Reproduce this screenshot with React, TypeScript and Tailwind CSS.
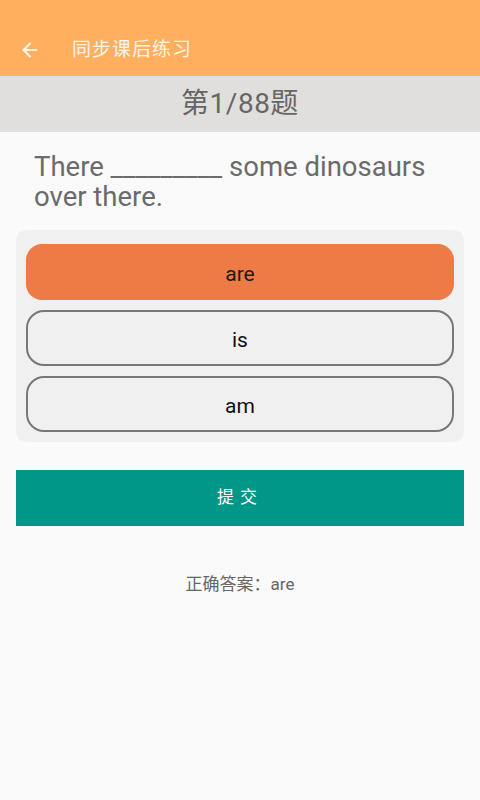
import { ArrowLeft } from "lucide-react";

const options = ["are", "is", "am"];

export default function App() {
  const selected = "are";
  return (
    <div
      className="min-h-[800px] bg-[#fafafa] flex flex-col"
      style={{ fontFamily: 'Roboto, "Noto Sans CJK SC", sans-serif' }}
    >
      {/* Toolbar */}
      <header className="h-[76px] bg-[#ffaf5e] flex items-end pb-[12px]">
        <div className="flex items-center h-[28px]">
          <ArrowLeft className="ml-[19px] w-[22px] h-[22px] text-[#fff6ea]" strokeWidth={2.3} />
          <h1 className="ml-[31px] text-[19px] text-[#fff6ea] tracking-[1px]">同步课后练习</h1>
        </div>
      </header>

      {/* Progress */}
      <div className="h-[56px] bg-[#e0dfdd] flex items-center justify-center">
        <span className="text-[28px] text-[#666666] tracking-[0.5px]">第1/88题</span>
      </div>

      {/* Question */}
      <p className="px-[34px] pt-[20px] text-[27.5px] leading-[30px] text-[#6b6b6b]">
        There _________ some dinosaurs over there.
      </p>

      {/* Options */}
      <div className="mx-[16px] mt-[18px] rounded-[10px] bg-[#f0f0f0] px-[10px] pt-[14px] pb-[10px] flex flex-col gap-[10px]">
        {options.map((o) => (
          <button
            key={o}
            className={
              o === selected
                ? "h-[56px] pt-[5px] rounded-[16px] bg-[#ee7b45] text-[21px] text-[#1a1a1a]"
                : "h-[56px] pt-[5px] rounded-[18px] border-2 border-[#777777] bg-[#f0f0f0] text-[21px] text-[#111111]"
            }
          >
            {o}
          </button>
        ))}
      </div>

      {/* Submit */}
      <button className="mx-[16px] mt-[28px] h-[56px] bg-[#009688] text-white text-[17px] tracking-[6px]">
        提交
      </button>

      <p className="mt-[46px] text-center text-[17px] text-[#666666]">正确答案：are</p>
    </div>
  );
}
